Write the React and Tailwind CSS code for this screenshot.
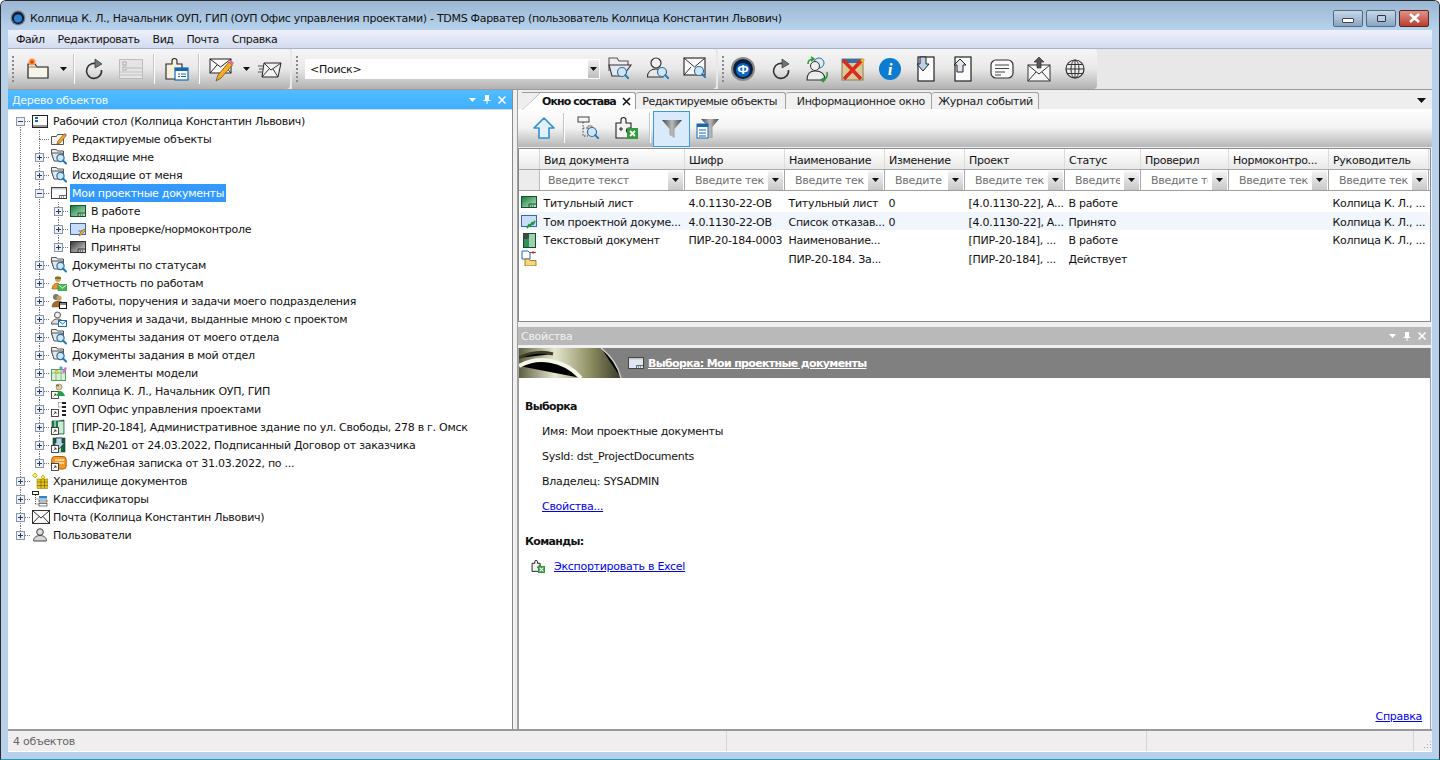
import React from "react";

const Svg = ({ s = 16, w, h, vb = "0 0 16 16", children }) => (
  <svg width={w || s} height={h || s} viewBox={vb} fill="none" className="shrink-0 block">{children}</svg>
);
const Lens = ({ x = 9, y = 9, r = 3.2 }) => (
  <g>
    <circle cx={x} cy={y} r={r} fill="#cfe6f7" stroke="#2f6f9f" strokeWidth="1.2" />
    <path d={`M${x + r * 0.7} ${y + r * 0.7}l3 3`} stroke="#1f79b8" strokeWidth="2" strokeLinecap="round" />
  </g>
);
const I = {
  desk: () => <Svg><rect x=".5" y="2.5" width="15" height="12" fill="#fff" stroke="#222" /><rect x="1" y="12" width="14" height="2" fill="#999" /><rect x="3" y="4" width="3" height="2" fill="#1668c8" /><rect x="3" y="7" width="3" height="2" fill="#1668c8" /></Svg>,
  pencil: () => <Svg><path d="M.5 5.5h5l1-2h6v10H.5z" fill="#f4f4f0" stroke="#555" /><path d="M6 13l1-3 6-7 2 2-6 7z" fill="#f3a52d" stroke="#8a5a10" strokeWidth=".7" /><path d="M13 3l2 2 1-1-2-2z" fill="#e05a8a" /></Svg>,
  find: () => <Svg><path d="M.5 4V.5h5l1 1.5h6V9H2z" fill="#eee" stroke="#555" /><path d="M.5 4h11L9 12H3z" fill="#e2e8ef" stroke="#555" /><Lens x={9.5} y={9} r={3.6} /></Svg>,
  sel: ({ c = "#fff" }) => <Svg><rect x=".5" y="2.5" width="15" height="11" fill={c} stroke="#444" /><rect x="1" y="3" width="14" height="1.5" fill="#c8c8c8" /><path d="M8.5 13.500V10.500h7" stroke="#444" strokeWidth=".8" /><path d="M10 12h1m1 0h1" stroke="#444" /></Svg>,
  selGreen: () => <Svg><defs><linearGradient id="gg" x1="0" y1="0" x2="1" y2="1"><stop offset="0" stopColor="#0d7a3c" /><stop offset="1" stopColor="#c8e8c8" /></linearGradient></defs><rect x=".5" y="2.5" width="15" height="11" fill="url(#gg)" stroke="#14532d" /><path d="M8 13.5v-3.5h7.5" stroke="#14532d" /><path d="M10 12h1m1 0h1" stroke="#14532d" /></Svg>,
  selBlue: () => <Svg><rect x=".5" y="2.5" width="15" height="11" fill="#c9dcf7" stroke="#3b64b8" /><path d="M8.5 10h7" stroke="#3b64b8" /><path d="M9 15l1-3 4-4 1.5 1.5-4 4z" fill="#f0b020" stroke="#8a5a10" strokeWidth=".6" /></Svg>,
  selGray: () => <Svg><defs><linearGradient id="gy" x1="0" y1="0" x2="1" y2="1"><stop offset="0" stopColor="#333" /><stop offset="1" stopColor="#ddd" /></linearGradient></defs><rect x=".5" y="2.5" width="15" height="11" fill="url(#gy)" stroke="#333" /><path d="M8 13.5v-3.5h7.5" stroke="#333" /><path d="M10 12h1m1 0h1" stroke="#333" /></Svg>,
  report: () => <Svg><circle cx="7" cy="4" r="3" fill="#c9a05a" /><path d="M4 3h6" stroke="#6b7a3a" strokeWidth="2" /><path d="M1 14c0-4 3-6 6-6l2 2v4z" fill="#e0962a" stroke="#8a5a10" strokeWidth=".6" /><rect x="7" y="9.5" width="9" height="6" fill="#3fbf4f" stroke="#1f7a2f" strokeWidth=".6" /><path d="M7.5 10l4 3 4-3" stroke="#fff" strokeWidth=".8" /></Svg>,
  team: () => <Svg><circle cx="5" cy="4" r="3" fill="#777" /><circle cx="8" cy="5" r="2.6" fill="#c9a05a" /><path d="M1 14c0-4 3-6 6-6s5 1 5 3v3z" fill="#a36a20" stroke="#553" strokeWidth=".5" /><rect x="8.5" y="9.5" width="7" height="6" fill="#fff" stroke="#111" /><path d="M9 11h6" stroke="#111" /></Svg>,
  userMail: () => <Svg><circle cx="6.5" cy="4" r="3" fill="#eee" stroke="#555" /><path d="M.5 13c0-3 2.500-5 6-5s6 2 6 5z" fill="#ddd" stroke="#555" /><rect x="7.500" y="9.500" width="8" height="6" fill="#fff" stroke="#1b6cb4" /><path d="M8 10l3.500 3 3.500-3" stroke="#1b6cb4" /></Svg>,
  model: () => <Svg><rect x=".5" y="4.500" width="14" height="11" fill="#d8efd8" stroke="#5a9a5a" /><path d="M.5 8h14M5 4.500v11M10 4.500v11" stroke="#5a9a5a" strokeWidth=".6" /><path d="M6 5l2 2-2 2-2-2z" fill="#f4d21c" stroke="#b59a00" strokeWidth=".4" /><path d="M11 7l3-5 2 1-3 5z" fill="#d96bd0" /><path d="M10 1l2 2-2 2-2-2z" fill="#4a9ae0" /></Svg>,
  person: () => <Svg><Short /><circle cx="8" cy="4" r="3" fill="#e8c9a0" stroke="#775" strokeWidth=".6" /><path d="M8 2.500h-3" stroke="#6b7a3a" strokeWidth="1.600" /><path d="M6 13c0-3 1-5 3-5s4 2 5 5z" fill="#21a04a" /></Svg>,
  org: () => <Svg><Short /><path d="M7.500 1.500H12M7.500 1.500V6M7.500 6h4" stroke="#777" strokeDasharray="1 1" /><rect x="11" y="1" width="4" height="2" fill="#222" /><rect x="11" y="5" width="4" height="2" fill="#222" /><rect x="11" y="9" width="4" height="2" fill="#222" /><rect x="11" y="13" width="4" height="2" fill="#222" /></Svg>,
  project: () => <Svg><path d="M1 2h6l6-1v14H1z" fill="#1b7f4b" stroke="#0d4f2b" strokeWidth=".7" /><path d="M4 2v13" stroke="#a8dcb8" strokeWidth="1.500" /><path d="M7 2.500h5.500v12H7z" fill="#cfe9d5" /><Short /></Svg>,
  incoming: () => <Svg><rect x="2" y="1" width="12" height="14" fill="#14663a" stroke="#0d3d24" strokeWidth=".6" /><path d="M9 1v14" stroke="#bfe0c9" strokeWidth="2" /><path d="M5 1h6v5h2.500L8 12 2.500 6H5z" fill="#b9d4f2" stroke="#222" strokeWidth=".7" /><Short /></Svg>,
  memo: () => <Svg><rect x=".7" y="1.500" width="14.500" height="12.500" rx="3" fill="#f39a26" stroke="#b2620c" /><path d="M4 5h9M4 8h9" stroke="#fff" strokeWidth="1.200" /><Short /></Svg>,
  store: () => <Svg><path d="M3 0l2.500 2.500L3 5 .5 2.500z" fill="#fde94a" stroke="#8a7a00" strokeWidth=".5" /><path d="M11 2l2 2-2 2-2-2z" fill="#fde94a" stroke="#8a7a00" strokeWidth=".5" /><rect x="5" y="6" width="11" height="9.500" fill="#e8c21c" stroke="#8a7a00" strokeWidth=".5" /><path d="M5 9h11M5 12.500h11M9 6v9.500M12.500 6v9.500" stroke="#6a5a00" strokeWidth=".6" /></Svg>,
  classif: () => <Svg><rect x=".5" y=".5" width="6" height="3" fill="#fff" stroke="#222" /><path d="M3.500 4v10M3.500 8h3M3.500 13h3" stroke="#555" strokeDasharray="1 1" /><rect x="7" y="5" width="8" height="2.500" fill="#2a84d6" /><rect x="7" y="9" width="8" height="2" fill="#fff" stroke="#222" strokeWidth=".6" /><rect x="7" y="12.500" width="8" height="2.500" fill="#fff" stroke="#222" strokeWidth=".6" /></Svg>,
  mail: () => <Svg w={18} s={16} vb="0 0 18 16"><rect x=".5" y="1.500" width="17" height="13" fill="#fafafa" stroke="#333" /><path d="M1 2l8 7 8-7M1 14l6-6.500M17 14l-6-6.500" stroke="#333" /></Svg>,
  users: () => <Svg><circle cx="8" cy="5" r="3.300" fill="#ddd" stroke="#444" /><path d="M1.500 13.500c0-3 3-5 6.500-5s6.500 2 6.500 5v.5h-13z" fill="#d8d8d8" stroke="#444" /></Svg>,
};
function Short() {
  return <g><rect x=".5" y="8.500" width="7" height="7" fill="#fff" stroke="#222" strokeWidth=".8" /><path d="M2.500 13.500l2.500-2.500M3 11h2v2" stroke="#222" strokeWidth=".7" /></g>;
}

const Conn = ({ up, down, exp, h }) => (
  <svg width="19" height="18" className="shrink-0 block">
    {up && <path d="M9.500 0V9" stroke="#777" strokeDasharray="1 1" />}
    {down && <path d="M9.500 9V18" stroke="#777" strokeDasharray="1 1" />}
    {h && <path d="M10 9.500H20" stroke="#777" strokeDasharray="1 1" />}
    {exp && (
      <g>
        <rect x="5.500" y="5.500" width="8" height="8" fill="#eef0f4" stroke="#8c95a6" />
        <path d="M7 9.500h5" stroke="#23406e" />
        {exp === "+" && <path d="M9.500 7v5" stroke="#23406e" />}
      </g>
    )}
  </svg>
);
const Guide = ({ on }) => (
  <svg width="19" height="18" className="shrink-0 block">
    {on && <path d="M9.500 0V18" stroke="#777" strokeDasharray="1 1" />}
  </svg>
);

const tree = [
  [0, "-", "desk", "Рабочий стол (Колпица Константин Львович)"],
  [1, "", "pencil", "Редактируемые объекты"],
  [1, "+", "find", "Входящие мне"],
  [1, "+", "find", "Исходящие от меня"],
  [1, "-", "sel", "Мои проектные документы", true],
  [2, "+", "selGreen", "В работе"],
  [2, "+", "selBlue", "На проверке/нормоконтроле"],
  [2, "+", "selGray", "Приняты", false, true],
  [1, "+", "find", "Документы по статусам"],
  [1, "+", "report", "Отчетность по работам"],
  [1, "+", "team", "Работы, поручения и задачи моего подразделения"],
  [1, "+", "userMail", "Поручения и задачи, выданные мною с проектом"],
  [1, "+", "find", "Документы задания от моего отдела"],
  [1, "+", "find", "Документы задания в мой отдел"],
  [1, "+", "model", "Мои элементы модели"],
  [1, "+", "person", "Колпица К. Л., Начальник ОУП, ГИП"],
  [1, "+", "org", "ОУП Офис управления проектами"],
  [1, "+", "project", "[ПИР-20-184], Административное здание по ул. Свободы, 278 в г. Омск"],
  [1, "+", "incoming", "ВхД №201 от 24.03.2022, Подписанный Договор от заказчика"],
  [1, "+", "memo", "Служебная записка от 31.03.2022, по ...", false, true],
  [0, "+", "store", "Хранилище документов"],
  [0, "+", "classif", "Классификаторы"],
  [0, "+", "mail", "Почта (Колпица Константин Львович)"],
  [0, "+", "users", "Пользователи", false, true],
];

const TreeRow = ({ d, exp, icon, text, sel, last, i }) => {
  const Ic = I[icon];
  return (
    <div className="flex h-[18px] items-center">
      {d >= 1 && <Guide on={i < 23 && tree.slice(i).some((r) => r[0] === 0)} />}
      {d >= 2 && <Guide on />}
      <Conn up={i > 0} down={!last} exp={exp === "" ? null : exp === "-" ? "-" : "+"} h />
      <div className="ml-[2px] w-[17px] flex justify-start"><Ic /></div>
      <span className={`ml-[2px] px-[2px] h-[18px] pt-[1px] leading-[18px] whitespace-nowrap ${sel ? "bg-[#3399ff] text-white" : "text-[#111]"}`}>{text}</span>
    </div>
  );
};

const Arrow = ({ c = "#111" }) => <svg width="7" height="4" viewBox="0 0 7 4" className="shrink-0"><path d="M0 0h7L3.500 4z" fill={c} /></svg>;
const Sep = () => <div className="w-[1px] h-[30px] bg-[#c4c4c4] border-r border-white shrink-0 box-content" />;
const Grip = () => (
  <div className="w-[10px] h-full flex items-center justify-center shrink-0">
    <div className="h-[26px] border-l-2 border-dotted border-[#8a8a8a]" />
  </div>
);
const Slot = ({ w, children }) => <div className={`${w} h-full flex items-center justify-center shrink-0`}>{children}</div>;
const Band = ({ w, children }) => (
  <div className={`${w} h-full shrink-0 flex items-center rounded-tr-[4px] rounded-br-[4px] bg-gradient-to-b from-[#f6f6f6] via-[#e8e8e8] to-[#b2b2b2]`}>{children}</div>
);

const T = {
  newFolder: () => <Svg s={26} vb="0 0 26 26"><path d="M3 8h7l2 3h11v11H3z" fill="#f7f3e8" stroke="#222" strokeWidth="1.200" /><path d="M3 11h20" stroke="#777" /><circle cx="7" cy="6" r="3.500" fill="#f5a03a" /><circle cx="7" cy="6" r="1.800" fill="#e8341c" /></Svg>,
  refresh: ({ o = 1 }) => <Svg s={22} vb="0 0 22 22"><g opacity={o}><path d="M15 6.500A7.500 7.500 0 1 0 18.500 12" stroke="#333" strokeWidth="1.600" /><path d="M12 1l7 5-7 4z" fill="#6c7680" stroke="#333" strokeWidth=".7" /></g></Svg>,
  disabled: () => <Svg w={24} h={20} vb="0 0 24 20"><rect x=".5" y=".5" width="23" height="19" fill="#e4e4e4" stroke="#bdbdbd" /><rect x="4" y="3" width="3" height="3" stroke="#aaa" fill="#f4f4f4" /><rect x="4" y="8" width="3" height="3" stroke="#aaa" fill="#f4f4f4" /><path d="M1 13h22M1 16h22" stroke="#c4c4c4" /><path d="M8 9h15" stroke="#bbb" /></Svg>,
  puzzle: () => <Svg s={26} vb="0 0 26 26"><path d="M2 8h6V5a2.500 2.500 0 0 1 5 0v3h5v5h-1v10H2z" fill="#f6f0dc" stroke="#222" strokeWidth="1.100" /><rect x="11" y="12" width="13" height="12" fill="#fff" stroke="#1467b3" strokeWidth="1.200" /><rect x="11" y="12" width="13" height="3" fill="#1467b3" /><path d="M14 18h2m1 0h5M14 20.500h2m1 0h5" stroke="#1467b3" /></Svg>,
  mailPen: () => <Svg s={26} vb="0 0 26 26"><rect x="1" y="3" width="21" height="14" fill="#fafafa" stroke="#222" /><path d="M1 3l10.500 8L22 3M1 17l7-8M22 17l-6-7" stroke="#222" /><path d="M7 25l2-6L20 6l3.500 3L12 22z" fill="#f4ad2c" stroke="#7a4f0a" strokeWidth=".8" /><path d="M20 6l2-2 3 3-1.500 2z" fill="#e86b9a" /></Svg>,
  send: () => <Svg s={24} vb="0 0 24 24"><path d="M6 6h17l-3 14H4z" fill="#f2f2f2" stroke="#222" /><path d="M6 6l7 7 10-7M4 20l7-8M20 20l-5-8" stroke="#222" strokeWidth=".9" /><path d="M0 9h6M1 12h4M0 15h4" stroke="#555" /></Svg>,
  sFolder: () => <Svg s={26} vb="0 0 26 26"><path d="M2 15V2h8l2 3h9v5" fill="#eee" stroke="#555" strokeWidth="1.100" /><path d="M2 9h22l-8 11H5z" fill="#e4e9ef" stroke="#333" strokeWidth="1.100" /><Lens x={15} y={16} r={4.500} /></Svg>,
  sUser: () => <Svg s={26} vb="0 0 26 26"><circle cx="10" cy="7" r="5" fill="#f2f2f2" stroke="#333" strokeWidth="1.200" /><path d="M1.500 21c0-5 3.500-8 8.500-8 2 0 5 1 7 3v5z" fill="#e8e8e8" stroke="#333" strokeWidth="1.200" /><Lens x={16} y={16} r={4.500} /></Svg>,
  sMail: () => <Svg s={26} vb="0 0 26 26"><rect x="1" y="2" width="21" height="17" fill="#fafafa" stroke="#333" strokeWidth="1.200" /><path d="M1 2l10.500 9L22 2M1 19l7-8" stroke="#333" /><Lens x={16} y={15} r={4.500} /></Svg>,
  fi: () => <Svg s={26} vb="0 0 26 26"><circle cx="13" cy="13" r="12" fill="#8a8a8a" /><circle cx="13" cy="13" r="10" fill="#0a1f40" /><circle cx="13" cy="14" r="7" fill="#0b66c4" /><text x="13" y="18" textAnchor="middle" fontSize="13" fontWeight="700" fill="#fff" fontFamily="Liberation Sans">Ф</text></Svg>,
  usersSync: () => <Svg s={28} vb="0 0 28 28"><circle cx="16" cy="8" r="5" fill="#dfeaf5" stroke="#2d6ea8" /><circle cx="12" cy="11" r="4.500" fill="#eee" stroke="#333" /><path d="M4 25c0-6 3-9 8-9 6 0 10 3 10 9z" fill="#eee" stroke="#333" strokeWidth="1.100" /><path d="M5 9c0-3 2-5 5-5M8 2l3 2-3 2" stroke="#2f9a3a" strokeWidth="1.600" /><path d="M24 17c1 4-1 7-5 8M21 23l-3 2 3 2" stroke="#2f9a3a" strokeWidth="1.600" /></Svg>,
  xMap: () => <Svg s={26} vb="0 0 26 26"><rect x="2" y="3" width="21" height="21" fill="#d9c99a" stroke="#8a7a50" /><rect x="2" y="3" width="21" height="4" fill="#3a6ea8" /><path d="M17 9l5-7 3 2-5 7z" fill="#f0b030" /><path d="M3 4l18 19M21 5L4 23" stroke="#d92a1c" strokeWidth="3.400" /></Svg>,
  info: () => <Svg s={24} vb="0 0 24 24"><circle cx="12" cy="12" r="11" fill="#0d7bd0" /><text x="12" y="18" textAnchor="middle" fontSize="17" fontStyle="italic" fontWeight="700" fill="#fff" fontFamily="Liberation Serif">i</text></Svg>,
  docDown: () => <Svg w={20} h={26} vb="0 0 20 26"><rect x="3" y="1" width="16" height="24" fill="#fbfbfb" stroke="#222" strokeWidth="1.200" /><path d="M5 1h6v7h3l-6 7-6-7h3z" fill="#bcd0ea" stroke="#222" /></Svg>,
  docUp: () => <Svg w={20} h={26} vb="0 0 20 26"><rect x="3" y="1" width="16" height="24" fill="#fbfbfb" stroke="#222" strokeWidth="1.200" /><path d="M8 3l6 6h-3v7H5V9H2z" fill="#dfe6f0" stroke="#222" /></Svg>,
  comment: () => <Svg w={24} h={20} vb="0 0 24 20"><rect x="1" y="1" width="22" height="18" rx="5" fill="#f8f8f8" stroke="#333" strokeWidth="1.200" /><path d="M5 6h14M5 9.500h14M5 13h10M5 16h6" stroke="#444" /></Svg>,
  mailUp: () => <Svg s={26} vb="0 0 26 26"><rect x="2" y="9" width="22" height="16" fill="#f8f8f8" stroke="#333" /><path d="M2 9l11 9L24 9M2 25l8-9M24 25l-8-9" stroke="#333" /><path d="M13 1l5 5h-3v6h-4V6H8z" fill="#555" stroke="#222" strokeWidth=".6" /></Svg>,
  globe: () => <Svg s={20} vb="0 0 20 20"><circle cx="10" cy="10" r="9" fill="#eee" stroke="#333" strokeWidth="1.200" /><ellipse cx="10" cy="10" rx="4" ry="9" stroke="#333" /><path d="M10 1v18M1 10h18M2.500 5.500h15M2.500 14.500h15" stroke="#333" /></Svg>,
  up: () => <Svg s={24} vb="0 0 24 24"><path d="M12 2l10 10h-5v10H7V12H2z" fill="#e2f0fb" stroke="#2f8fd0" strokeWidth="1.600" strokeLinejoin="round" /></Svg>,
  treeFind: () => <Svg s={26} vb="0 0 26 26"><rect x="2" y="2" width="11" height="5" fill="#f6f6f6" stroke="#444" /><path d="M7 7v14h5M7 13h6" stroke="#444" strokeDasharray="1.500 1.500" /><rect x="12" y="11" width="4" height="3" fill="#fff" stroke="#444" strokeWidth=".7" /><Lens x={16} y={17} r={4.500} /></Svg>,
  xlsPuzzle: () => <Svg s={26} vb="0 0 26 26"><path d="M2 8h5V5a2.500 2.500 0 0 1 5 0v3h5v5h-2a2 2 0 0 0 0 5h2v5H2z" fill="#f3f3f3" stroke="#222" strokeWidth="1.100" /><rect x="13" y="13" width="11" height="11" fill="#2e9a3a" /><path d="M16 16l5 5M21 16l-5 5" stroke="#fff" strokeWidth="1.800" /><path d="M5 14h4M7 12v4" stroke="#222" /></Svg>,
  filter: () => <Svg s={24} vb="0 0 24 24"><defs><linearGradient id="fl" x1="0" x2="1"><stop offset="0" stopColor="#444" /><stop offset=".5" stopColor="#bbb" /><stop offset="1" stopColor="#444" /></linearGradient></defs><path d="M2 3h20l-7.500 9v9l-5-3v-6z" fill="url(#fl)" /></Svg>,
  filterDoc: () => <Svg s={24} vb="0 0 24 24"><path d="M5 3h18l-6.500 8v11h-4V11z" fill="url(#fl)" /><rect x="1" y="8" width="11" height="14" fill="#fff" stroke="#1467b3" /><rect x="1" y="8" width="11" height="3" fill="#1467b3" /><path d="M3 14h7M3 17h7M3 20h7" stroke="#1467b3" /></Svg>,
};

const cols = ["w-[145px]", "w-[100px]", "w-[100px]", "w-[80px]", "w-[100px]", "w-[76px]", "w-[88px]", "w-[100px]", "w-[100px]"];
const heads = ["Вид документа", "Шифр", "Наименование", "Изменение", "Проект", "Статус", "Проверил", "Нормоконтро...", "Руководитель"];
const rows = [
  ["selGreen", "Титульный лист", "4.0.1130-22-ОВ", "Титульный лист", "0", "[4.0.1130-22], А...", "В работе", "", "", "Колпица К. Л., ..."],
  ["selBlue2", "Том проектной докуме...", "4.0.1130-22-ОВ", "Список отказав...", "0", "[4.0.1130-22], А...", "Принято", "", "", "Колпица К. Л., ..."],
  ["textDoc", "Текстовый документ", "ПИР-20-184-0003", "Наименование...", "", "[ПИР-20-184], ...", "В работе", "", "", "Колпица К. Л., ..."],
  ["folderDoc", "", "", "ПИР-20-184. За...", "", "[ПИР-20-184], ...", "Действует", "", "", ""],
];
const RowIcons = {
  selGreen: I.selGreen,
  selBlue2: () => <Svg><rect x=".5" y="2.500" width="15" height="11" fill="#c9dcf7" stroke="#3b64b8" /><path d="M6 15l2-3 1 1 2-3 1 1 2-3" stroke="#1c9a3a" strokeWidth="1.800" /></Svg>,
  textDoc: () => <Svg><rect x="2.500" y="1.500" width="12" height="14" fill="#2f8f5a" stroke="#0d4f2b" /><path d="M8 2h6v13H8z" fill="#9ed0b0" /><circle cx="5" cy="4" r="3" fill="#444" /></Svg>,
  folderDoc: () => <Svg><path d="M1 1h6l2 2v6H1z" fill="#fff" stroke="#1b6cc4" /><path d="M4 9h4l1 1.500h6V16H4z" fill="#f6d67a" stroke="#8a6a10" strokeWidth=".8" /><path d="M9 2.500h6M12 1v3" stroke="#d9281c" /></Svg>,
};

const TextCss = "[font-family:'DejaVu_Sans','Noto_Sans',sans-serif]";

export default function App() {
  return (
    <div className={`w-[1440px] h-[760px] overflow-hidden flex flex-col text-[11px] leading-none tracking-[-0.28px] text-[#111] bg-[#b8d1ea] border border-[#2a2a2a] border-b-[#1f9fb0] rounded-t-[6px] ${TextCss}`}>
      {/* title bar */}
      <div className="h-[29px] shrink-0 flex items-center bg-gradient-to-b from-[#9ab6d2] to-[#b7d2ec] pl-[9px] pr-[10px] pt-[5px]">
        <Svg s={16} vb="0 0 26 26"><circle cx="13" cy="13" r="12" fill="#7a7a7a" /><circle cx="13" cy="13" r="10" fill="#0a1f40" /><circle cx="13" cy="14" r="6.500" fill="#2f7fd0" /></Svg>
        <span className="ml-[4px] text-[#111] tracking-[-0.3px] whitespace-nowrap">Колпица К. Л., Начальник ОУП, ГИП (ОУП Офис управления проектами) - TDMS Фарватер (пользователь Колпица Константин Львович)</span>
        <div className="ml-auto flex gap-[3px]">
          <div className="w-[30px] h-[17px] rounded-[2px] border border-[#51687f] bg-gradient-to-b from-[#c6d8ea] to-[#8aa6c2] flex items-center justify-center"><div className="w-[10px] h-[3px] mt-[4px] bg-white border border-[#445] rounded-[1px] box-content" /></div>
          <div className="w-[30px] h-[17px] rounded-[2px] border border-[#51687f] bg-gradient-to-b from-[#c6d8ea] to-[#8aa6c2] flex items-center justify-center"><div className="w-[9px] h-[7px] bg-[#b9cee2] border border-[#334] rounded-[1px]" /></div>
          <div className="w-[30px] h-[17px] rounded-[2px] border border-[#5c2620] bg-gradient-to-b from-[#e0938a] to-[#b83c2c] flex items-center justify-center">
            <svg width="13" height="10" viewBox="0 0 13 10"><path d="M2 1l9 8M11 1L2 9" stroke="#fff" strokeWidth="2.600" /></svg>
          </div>
        </div>
      </div>

      <div className="mx-[7px] flex flex-col flex-1 min-h-0 bg-[#f0f0f0]">
        {/* menu */}
        <div className="h-[19px] shrink-0 flex items-center pl-[8px] pt-[1px] gap-[13px] tracking-[-0.45px] bg-gradient-to-b from-[#eef1fa] to-[#d3dbef] border-b border-[#aab4c8] text-[#111]">
          {["Файл", "Редактировать", "Вид", "Почта", "Справка"].map((m) => <span key={m}>{m}</span>)}
        </div>
        {/* toolbar */}
        <div className="h-[40px] shrink-0 flex bg-[#e8e8e8] gap-[2px]">
          <Band w="w-[282px]">
            <Grip />
            <Slot w="w-[40px]"><T.newFolder /></Slot>
            <Slot w="w-[10px]"><Arrow /></Slot>
            <div className="w-[5px]" /><Sep />
            <Slot w="w-[38px]"><T.refresh /></Slot>
            <Slot w="w-[35px]"><T.disabled /></Slot>
            <div className="w-[5px]" /><Sep />
            <Slot w="w-[43px]"><T.puzzle /></Slot>
            <Sep />
            <div className="w-[2px]" />
            <Slot w="w-[40px]"><T.mailPen /></Slot>
            <Slot w="w-[8px]"><Arrow /></Slot>
            <Slot w="w-[39px]"><T.send /></Slot>
          </Band>
          <Band w="w-[424px]">
            <Grip />
            <div className="ml-[3px] w-[295px] h-[20px] bg-white flex items-center pl-[5px] pr-[1px] justify-between">
              <span className="text-[#111]">&lt;Поиск&gt;</span>
              <div className="w-[11px] h-[18px] bg-gradient-to-b from-[#f0f0f0] to-[#bdbdbd] flex items-center justify-center"><Arrow /></div>
            </div>
            <Slot w="w-[40px]"><T.sFolder /></Slot>
            <Slot w="w-[37px]"><T.sUser /></Slot>
            <Slot w="w-[37px]"><T.sMail /></Slot>
          </Band>
          <Band w="w-[379px]">
            <Grip />
            <div className="w-[1px]" />
            <Slot w="w-[28px]"><T.fi /></Slot>
            <div className="w-[5px]" />
            <Slot w="w-[38px]"><T.refresh /></Slot>
            <Slot w="w-[34px]"><T.usersSync /></Slot>
            <Slot w="w-[38px]"><T.xMap /></Slot>
            <Slot w="w-[36px]"><T.info /></Slot>
            <Slot w="w-[34px]"><T.docDown /></Slot>
            <Slot w="w-[40px]"><T.docUp /></Slot>
            <Slot w="w-[40px]"><T.comment /></Slot>
            <Slot w="w-[34px]"><T.mailUp /></Slot>
            <Slot w="w-[38px]"><T.globe /></Slot>
          </Band>
        </div>

        {/* main */}
        <div className="flex flex-1 min-h-0 border-t border-[#9a9a9a]">
          {/* left panel */}
          <div className="w-[505px] shrink-0 flex flex-col bg-white border-r border-[#8a8a8a]">
            <div className="h-[19px] shrink-0 flex items-center px-[4px] bg-gradient-to-b from-[#52bcff] to-[#3fb0ff] text-white">
              <span className="text-[#f2f8ff] pt-[1px]">Дерево объектов</span>
              <div className="ml-auto flex items-center gap-[7px] pr-[2px]">
                <Arrow c="#fff" />
                <svg width="8" height="9" viewBox="0 0 8 9"><path d="M2 0h4v5h1.500v1h-3v3h-1V6h-3V5H2z" fill="#fff" /></svg>
                <svg width="8" height="8" viewBox="0 0 8 8"><path d="M.5.500l7 7M7.500.500l-7 7" stroke="#fff" strokeWidth="1.500" /></svg>
              </div>
            </div>
            <div className="flex-1 pt-[2px] pl-[3px] border-t border-[#d8d8d8]">
              {tree.map((r, i) => <TreeRow key={i} i={i} d={r[0]} exp={r[1]} icon={r[2]} text={r[3]} sel={r[4]} last={r[5]} />)}
            </div>
          </div>

          <div className="w-[4px] shrink-0 bg-[#f0f0f0]" />

          {/* right */}
          <div className="flex-1 min-w-0 flex flex-col border-l border-[#a0a0a0]">
            {/* tabs */}
            <div className="h-[19px] shrink-0 flex items-end bg-[#eeeeee] pl-[4px] relative pt-[1px]">
              <div className="h-[17px] w-[114px] bg-white flex items-center border-t border-r border-[#9a9a9a] rounded-tr-[3px] pl-[20px] relative">
                <svg width="20" height="17" className="absolute left-0 top-0" viewBox="0 0 20 17"><path d="M0 17L18 0h2v17z" fill="#fff" /><path d="M0 17L18 0" stroke="#9a9a9a" /><path d="M-1 0h19L0 17z" fill="#eeeeee" /></svg>
                <span className="font-bold tracking-[-0.9px] whitespace-nowrap relative">Окно состава</span>
                <svg width="9" height="9" viewBox="0 0 9 9" className="ml-auto mr-[4px]"><path d="M1 1l7 7M8 1L1 8" stroke="#111" strokeWidth="1.500" /></svg>
              </div>
              <div className="w-[150px] h-[17px] flex items-center justify-end pr-[8px] tracking-[-0.5px] border-t border-r border-[#a0a0a0] rounded-t-[3px] bg-[#f1f1f1] text-[#222] whitespace-nowrap">Редактируемые объекты</div>
              <div className="w-[146px] h-[17px] flex items-center justify-end pr-[6px] border-t border-r border-[#a0a0a0] rounded-t-[3px] bg-[#f1f1f1] text-[#222] whitespace-nowrap">Информационное окно</div>
              <div className="w-[107px] h-[17px] flex items-center justify-end pr-[5px] border-t border-r border-[#a0a0a0] rounded-t-[3px] bg-[#f1f1f1] text-[#222] whitespace-nowrap">Журнал событий</div>
              <div className="ml-auto mr-[6px] self-center"><svg width="9" height="5" viewBox="0 0 9 5"><path d="M0 0h9L4.500 5z" fill="#111" /></svg></div>
            </div>
            {/* right toolbar */}
            <div className="h-[38px] shrink-0 flex items-center bg-gradient-to-b from-white via-[#f2f2f2] to-[#b6b6b6] pl-[10px]">
              <Slot w="w-[32px]"><T.up /></Slot>
              <div className="w-[3px]" /><Sep />
              <Slot w="w-[48px]"><T.treeFind /></Slot>
              <Slot w="w-[28px]"><T.xlsPuzzle /></Slot>
              <div className="w-[8px]" /><Sep />
              <div className="w-[2px]" />
              <div className="w-[37px] h-[36px] mt-[2px] shrink-0 bg-[#d9ebfb] border border-[#3a9ae0] flex items-center justify-center"><T.filter /></div>
              <Slot w="w-[36px]"><T.filterDoc /></Slot>
            </div>
            {/* grid */}
            <div className="h-[174px] shrink-0 mt-[1px] mr-[1px] bg-white border border-[#8a8a8a] flex flex-col overflow-hidden">
              <div className="h-[21px] shrink-0 flex bg-gradient-to-b from-white via-[#f4f4f4] to-[#e8e8e8] border-b border-[#a8a8a8]">
                <div className="w-[21px] shrink-0 border-r border-[#d4d4d4]" />
                {heads.map((h, i) => <div key={h} className={`${cols[i]} shrink-0 flex items-center pl-[4px] pt-[2px] border-r border-[#dcdcdc] whitespace-nowrap text-[#111]`}>{h}</div>)}
              </div>
              <div className="h-[21px] shrink-0 flex bg-white border-b border-[#a0a0a0]">
                <div className="w-[21px] shrink-0 bg-[#ececec] border-r border-[#bbb]" />
                {heads.map((h, i) => (
                  <div key={h} className={`${cols[i]} shrink-0 flex items-center border-r border-[#a8a8a8] pr-[1px] pl-[5px]`}>
                    <span className={`flex-1 min-w-0 overflow-hidden whitespace-nowrap text-[#707070] mr-[4px] ${i === 0 ? "pl-[3px]" : "pl-[5px]"}`}>Введите текст</span>
                    <div className="w-[15px] h-[19px] shrink-0 bg-gradient-to-b from-[#f4f4f4] to-[#c8c8c8] flex items-center justify-center"><Arrow /></div>
                  </div>
                ))}
              </div>
              <div className="pt-[2px]">
                {rows.map((r, i) => {
                  const Ic = RowIcons[r[0]];
                  return (
                    <div key={i} className={`h-[18.700px] flex items-center ${i === 1 ? "bg-[#f1f5fc]" : ""}`}>
                      <div className="w-[21px] shrink-0 pl-[2px]"><Ic /></div>
                      {r.slice(1).map((c, j) => <div key={j} className={`${cols[j]} shrink-0 pl-[3.500px] pt-[2px] whitespace-nowrap overflow-hidden`}>{c}</div>)}
                    </div>
                  );
                })}
              </div>
            </div>
            <div className="h-[5px] shrink-0 bg-[#f0f0f0]" />
            {/* props */}
            <div className="h-[18px] shrink-0 mr-[1px] flex items-center px-[3px] bg-[#b9b9b9] text-[#f2f2f2]">
              <span className="pt-[1px]">Свойства</span>
              <div className="ml-auto flex items-center gap-[7px] pr-[2px]">
                <Arrow c="#fff" />
                <svg width="8" height="9" viewBox="0 0 8 9"><path d="M2 0h4v5h1.500v1h-3v3h-1V6h-3V5H2z" fill="#fff" /></svg>
                <svg width="8" height="8" viewBox="0 0 8 8"><path d="M.5.500l7 7M7.500.500l-7 7" stroke="#fff" strokeWidth="1.500" /></svg>
              </div>
            </div>
            <div className="flex-1 min-h-0 mr-[1px] mt-[3px] bg-white border-l border-r border-[#a0a0a0] flex flex-col">
              <div className="h-[30px] shrink-0 bg-[#808080] flex items-center">
                <svg width="104" height="30" viewBox="0 0 104 30" className="shrink-0 block">
                  <defs>
                    <linearGradient id="bn" x1="0" y1="0" x2="1" y2="0"><stop offset="0" stopColor="#5e5e40" /><stop offset=".35" stopColor="#e6e6cf" /><stop offset=".7" stopColor="#8e8e62" /><stop offset="1" stopColor="#3a3a2a" /></linearGradient>
                  </defs>
                  <path d="M0 0h82c10 8 17 18 20 30H0z" fill="url(#bn)" />
                  <path d="M82 0c10 8 17 18 20 30" stroke="#cfcfc8" strokeWidth="1.500" />
                  <path d="M0 18c18-10 44-8 62 12" stroke="#f6f6e8" strokeWidth="4" />
                  <path d="M0 10C10 4 24 3 34 6" stroke="#3b3b2a" strokeWidth="3" />
                </svg>
                <div className="ml-[5px]"><I.sel c="#dfe8f2" /></div>
                <span className="ml-[4px] font-bold tracking-[-0.65px] text-white underline whitespace-nowrap">Выборка: Мои проектные документы</span>
              </div>
              <div className="flex-1 min-h-0 flex flex-col pl-[6px] pr-[8px] pt-[22px] pb-[7px] text-[#111]">
                <div className="font-bold tracking-[-0.65px] h-[12px] flex items-center">Выборка</div>
                <div className="pl-[17px] flex flex-col">
                  <div className="mt-[13px] h-[12px] flex items-center">Имя: Мои проектные документы</div>
                  <div className="mt-[13px] h-[12px] flex items-center">SysId: dst_ProjectDocuments</div>
                  <div className="mt-[13px] h-[12px] flex items-center">Владелец: SYSADMIN</div>
                  <div className="mt-[13px] h-[12px] flex items-center text-[#0000ee] underline">Свойства...</div>
                </div>
                <div className="mt-[23px] font-bold tracking-[-0.65px] h-[12px] flex items-center">Команды:</div>
                <div className="mt-[12px] flex items-center h-[14px] pl-[6px]">
                  <Svg s={14} vb="0 0 26 26"><path d="M2 8h5V5a2.500 2.500 0 0 1 5 0v3h5v5h-2a2 2 0 0 0 0 5h2v5H2z" fill="#f3f3f3" stroke="#222" strokeWidth="1.800" /><rect x="13" y="13" width="13" height="13" fill="#2e9a3a" /><path d="M16 16l7 7M23 16l-7 7" stroke="#fff" strokeWidth="2.200" /></Svg>
                  <span className="ml-[9px] text-[#0000ee] underline">Экспортировать в Excel</span>
                </div>
                <div className="mt-auto flex justify-end text-[#0000ee] underline">Справка</div>
              </div>
            </div>
          </div>
        </div>

        {/* status */}
        <div className="h-[22px] shrink-0 flex items-center bg-[#f0eeee] border-t-2 border-[#9a9a9a] text-[#666]">
          <span className="pl-[5px] pt-[1px] w-[719px] h-full flex items-center border-r border-[#d8d6d6] shrink-0">4 объектов</span>
          <div className="w-[420px] h-full border-r border-[#d8d6d6] shrink-0" />
          <div className="flex-1 h-full border-r border-[#d8d6d6]" />
          <div className="w-[18px] h-full flex items-end justify-end pb-[1px]">
            <svg width="10" height="10" viewBox="0 0 10 10"><path d="M8 1h1v1H8zM8 4h1v1H8zM5 4h1v1H5zM8 7h1v1H8zM5 7h1v1H5zM2 7h1v1H2z" fill="#aaa" /></svg>
          </div>
        </div>
        <div className="h-[1px] shrink-0 bg-white" />
      </div>
      <div className="h-[7px] shrink-0" />
    </div>
  );
}
